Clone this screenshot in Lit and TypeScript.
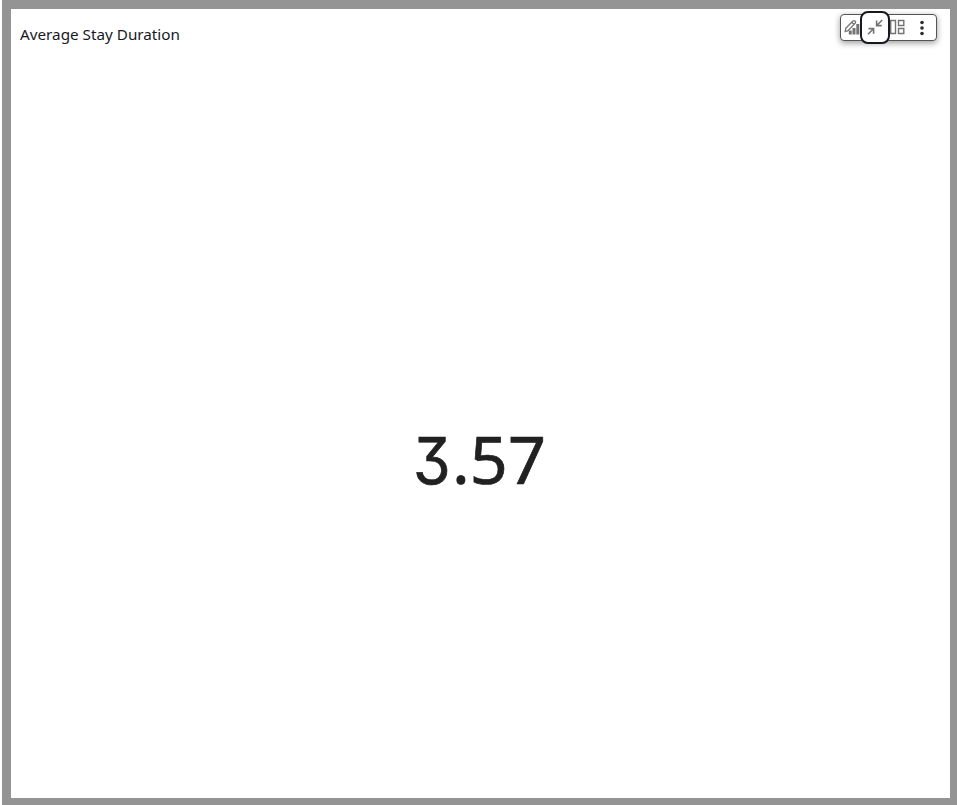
import { LitElement, html, css } from "lit";
import { customElement } from "lit/decorators.js";

@customElement("app-root")
export class AppRoot extends LitElement {
  static styles = css`
    :host { display: block; height: 100vh; box-sizing: border-box; padding-left: 2px; background: #fff; overflow: hidden; font-family: "Noto Sans", "Open Sans", sans-serif; color: #16191f; }
    .frame { height: 100%; box-sizing: border-box; background: #949494; padding: 9px 7px 7px 9px; display: flex; }
    .card { flex: 1; background: #fff; display: flex; flex-direction: column; }
    header { height: 50px; box-sizing: border-box; display: flex; justify-content: space-between; align-items: flex-start; padding: 5px 13px 0 9px; }
    h1 { margin: 9px 0 0; font-size: 15.25px; line-height: 22px; font-weight: 400; white-space: nowrap; }
    .tools { box-sizing: border-box; width: 97px; height: 27px; border: 1px solid #545454; border-radius: 4px; background: #fff; box-shadow: 0 2px 6px rgba(0, 0, 0, .4); display: flex; align-items: center; }
    .tool { appearance: none; border: 0; padding: 0 0 2px; background: none; display: flex; align-items: center; justify-content: center; height: 25px; box-sizing: border-box; flex: none; color: #737373; }
    .edit { width: 19px; padding-left: 3px; }
    .shrink { width: 30px; height: 33px; border: 2px solid #16191f; border-radius: 8px; background: #fff; z-index: 1; }
    .layout { width: 15px; }
    .more { width: 33px; padding-bottom: 0; color: #2b2b2b; }
    svg { display: block; flex: none; }
    .value { flex: 1; display: flex; align-items: baseline; justify-content: center; font-size: 66.5px; line-height: 92px; font-weight: 400; -webkit-text-stroke: .7px #212121; color: #212121; padding-top: 353px; }
    .three { width: 39px; font-family: Inter, "Noto Sans", sans-serif; font-feature-settings: "cv09" 1; font-size: 64.5px; transform: scaleX(.94); transform-origin: left; margin-left: -2px; }
  `;

  render() {
    return html`
      <div class="frame">
        <section class="card">
          <header>
            <h1>Average Stay Duration</h1>
            <div class="tools">
              <button class="tool edit" aria-label="Edit visual">
                <svg width="16" height="16" viewBox="0 0 16 16" fill="none" stroke="currentColor" stroke-width="1.3">
                  <path d="M1.2 12.5 1.7 9.2 8.9 2Q10 1.2 11 2.1T11.3 4.2L4 11.7ZM7.7 3.3 10 5.5" />
                  <path d="M6.3 15.5v-4M10 15.5V9M13.8 15.5V5" stroke-width="3" />
                </svg>
              </button>
              <button class="tool shrink" aria-label="Minimize">
                <svg width="16" height="16" viewBox="0 0 16 16" fill="none" stroke="currentColor" stroke-width="1.6">
                  <path d="M15.2 1 10 6.2M9.6 1.5v5.1h5.1M1 15.2 6.2 10M1.5 9.6h5.1v5.1" />
                </svg>
              </button>
              <button class="tool layout" aria-label="Layout">
                <svg width="15" height="16" viewBox="0 0 15 16" fill="none" stroke="currentColor" stroke-width="1.4">
                  <path d="M.7 1.5h4.8v13H.7zM8.5 1.5h5.3v5H8.5zM8.5 9.5h5.3v5H8.5z" />
                </svg>
              </button>
              <button class="tool more" aria-label="More options">
                <svg width="4" height="16" viewBox="0 0 4 16" fill="currentColor">
                  <circle cx="2" cy="2.5" r="1.8" /><circle cx="2" cy="8" r="1.8" /><circle cx="2" cy="13.5" r="1.8" />
                </svg>
              </button>
            </div>
          </header>
          <div class="value"><span class="three">3</span><span>.57</span></div>
        </section>
      </div>
    `;
  }
}
